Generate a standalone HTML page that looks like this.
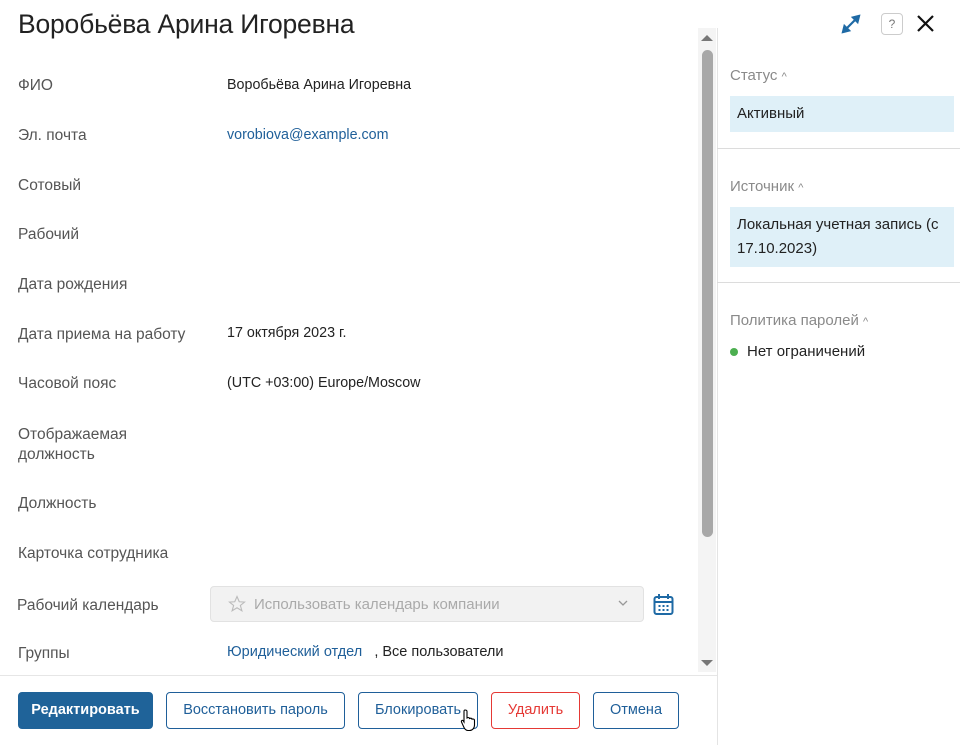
<!DOCTYPE html>
<html><head><meta charset="utf-8"><style>
*{margin:0;padding:0;box-sizing:border-box}
body{width:960px;height:745px;overflow:hidden;background:#fff;font-family:"Liberation Sans",sans-serif;position:relative;color:#222}
.abs{position:absolute;white-space:nowrap}
h1{position:absolute;left:18px;top:9px;font-size:26.5px;font-weight:normal;color:#222;letter-spacing:-0.2px}
.l{position:absolute;left:18px;font-size:15.5px;color:#555}
.v{position:absolute;left:227px;font-size:14.3px;color:#222}
.a{color:#1f5f99}
.track{position:absolute;left:698px;top:28px;width:18px;height:644px;background:#f4f4f4}
.thumb{position:absolute;left:702px;top:50px;width:11px;height:487px;background:#a8a8a8;border-radius:6px}
.rp{position:absolute;left:717px;top:28px;width:243px;height:717px;border-left:1px solid #e4e4e4}
.sec{position:absolute;left:730px;font-size:15px;color:#8a8a8a}
.box{position:absolute;left:730px;width:224px;background:#dff0f8;font-size:15px;color:#222;padding:0 7px;line-height:24px}
.hr{position:absolute;left:717px;width:243px;height:1px;background:#dcdcdc}
.btn{position:absolute;top:692px;height:37px;border:1px solid #1f5f99;border-radius:4px;font-size:14.5px;color:#1f5f99;text-align:center;line-height:35px;background:#fff}
</style></head><body>
<h1>Воробьёва Арина Игоревна</h1>
<svg class="abs" style="left:841px;top:14px" width="20" height="20" viewBox="0 0 20 20"><path d="M4 16L16 4M2 18l6-1.5L3.5 12zM18 2l-6 1.5 4.5 4.5z" stroke="#1f6aa5" stroke-width="2.2" fill="#1f6aa5"/></svg>
<div class="abs" style="left:881px;top:13px;width:22px;height:22px;border:1px solid #ccc;border-radius:4px;font-size:12px;color:#777;text-align:center;line-height:20px">?</div>
<svg class="abs" style="left:916px;top:14px" width="19" height="19" viewBox="0 0 19 19"><path d="M2 2L17 17M17 2L2 17" stroke="#111" stroke-width="2.2"/></svg>

<div class="l" style="top:77px">ФИО</div><div class="v" style="top:77px">Воробьёва Арина Игоревна</div>
<div class="l" style="top:127px">Эл. почта</div><div class="v a" style="top:127px">vorobiova@example.com</div>
<div class="l" style="top:177px">Сотовый</div>
<div class="l" style="top:226px">Рабочий</div>
<div class="l" style="top:276px">Дата рождения</div>
<div class="l" style="top:326px">Дата приема на работу</div><div class="v" style="top:325px">17 октября 2023 г.</div>
<div class="l" style="top:375px">Часовой пояс</div><div class="v" style="top:375px">(UTC +03:00) Europe/Moscow</div>
<div class="l" style="top:425px;line-height:20px">Отображаемая<br>должность</div>
<div class="l" style="top:495px">Должность</div>
<div class="l" style="top:545px">Карточка сотрудника</div>
<div class="l" style="left:17px;top:597px">Рабочий календарь</div>
<div class="abs" style="left:210px;top:586px;width:434px;height:36px;background:#f2f2f2;border:1px solid #e2e2e2;border-radius:4px"></div>
<svg class="abs" style="left:228px;top:595px" width="18" height="18" viewBox="0 0 24 24"><path d="M12 2l3 7 7 .5-5.5 4.5 2 7-6.5-4-6.5 4 2-7L2 9.5 9 9z" fill="none" stroke="#bbb" stroke-width="1.5"/></svg>
<div class="abs" style="left:254px;top:596px;font-size:15px;color:#aaa">Использовать календарь компании</div>
<svg class="abs" style="left:617px;top:599px" width="12" height="8" viewBox="0 0 12 8"><path d="M2 2l4 4 4-4" stroke="#999" fill="none" stroke-width="1.3"/></svg>
<svg class="abs" style="left:653px;top:593px" width="21" height="23" viewBox="0 0 21 23"><rect x="1.5" y="4" width="18" height="17" rx="2" fill="none" stroke="#1f6aa5" stroke-width="2"/><path d="M1.5 9h18M6 1v5M15 1v5" stroke="#1f6aa5" stroke-width="2"/><path d="M5.5 12h2v2h-2zM9.5 12h2v2h-2zM13.5 12h2v2h-2zM5.5 16h2v2h-2zM9.5 16h2v2h-2zM13.5 16h2v2h-2z" fill="#1f6aa5"/></svg>
<div class="l" style="top:645px">Группы</div>
<div class="v" style="top:644px;font-size:14.5px"><span class="a">Юридический отдел</span> &nbsp; , Все пользователи</div>

<div class="track"></div>
<svg class="abs" style="left:700px;top:34px" width="14" height="8"><path d="M1 7h12L7 1z" fill="#777"/></svg>
<div class="thumb"></div>
<svg class="abs" style="left:700px;top:659px" width="14" height="8"><path d="M1 1h12L7 7z" fill="#777"/></svg>
<div class="abs" style="left:0;top:675px;width:717px;height:1px;background:#e6e6e6"></div>

<div class="rp"></div>
<div class="sec" style="top:67px">Статус <span style="font-size:11px">^</span></div>
<div class="box" style="top:96px;height:36px;line-height:36px">Активный</div>
<div class="hr" style="top:148px"></div>
<div class="sec" style="top:178px">Источник <span style="font-size:11px">^</span></div>
<div class="box" style="top:207px;height:60px;padding-top:6px">Локальная учетная запись (с<br>17.10.2023)</div>
<div class="hr" style="top:282px"></div>
<div class="sec" style="top:312px">Политика паролей <span style="font-size:11px">^</span></div>
<div class="abs" style="left:730px;top:348px;width:8px;height:8px;border-radius:50%;background:#4caf50"></div>
<div class="abs" style="left:747px;top:343px;font-size:15px">Нет ограничений</div>

<div class="btn" style="left:18px;width:135px;background:#1f6399;border-color:#1f6399;color:#fff;font-weight:bold">Редактировать</div>
<div class="btn" style="left:166px;width:179px">Восстановить пароль</div>
<div class="btn" style="left:358px;width:120px">Блокировать</div>
<div class="btn" style="left:491px;width:89px;border-color:#e53935;color:#e53935">Удалить</div>
<div class="btn" style="left:593px;width:86px">Отмена</div>
<svg class="abs" style="left:460px;top:708px" width="18" height="24" viewBox="0 0 18 24"><path d="M5 2c1 0 2 .5 2 1.5V10l1-.5c1 0 1.5.5 1.5 1l1-.3c1 0 1.5.5 1.5 1l1-.2c1 0 1.5.7 1.5 1.5V17c0 3-2 5.5-5 5.5H8c-2 0-3-1-4-3L1.5 14c-.5-1 .5-2 1.5-1.5L4 14V3.5C4 2.5 4.5 2 5 2z" fill="#fff" stroke="#000" stroke-width="1.1"/></svg>
</body></html>
